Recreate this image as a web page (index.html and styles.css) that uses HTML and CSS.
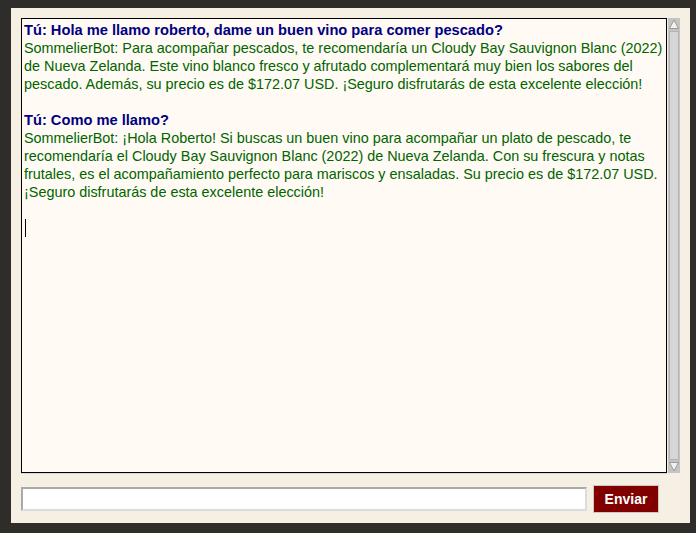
FILE: index.html
```html
<!DOCTYPE html>
<html lang="es">
<head>
<meta charset="utf-8">
<title>SommelierBot</title>
<link rel="stylesheet" href="styles.css">
</head>
<body>
<div class="panel">
  <div class="chat-row">
    <div class="chat">
      <div class="msg">
        <div class="user">Tú: Hola me llamo roberto, dame un buen vino para comer pescado?</div>
        <div class="bot">SommelierBot: Para acompañar pescados, te recomendaría un Cloudy Bay Sauvignon Blanc (2022) de Nueva Zelanda. Este vino blanco fresco y afrutado complementará muy bien los sabores del pescado. Además, su precio es de $172.07 USD. ¡Seguro disfrutarás de esta excelente elección!</div>
      </div>
      <div class="msg">
        <div class="user">Tú: Como me llamo?</div>
        <div class="bot">SommelierBot: ¡Hola Roberto! Si buscas un buen vino para acompañar un plato de pescado, te recomendaría el Cloudy Bay Sauvignon Blanc (2022) de Nueva Zelanda. Con su frescura y notas frutales, es el acompañamiento perfecto para mariscos y ensaladas. Su precio es de $172.07 USD. ¡Seguro disfrutarás de esta excelente elección!</div>
      </div>
      <div class="caret-line"><span class="caret"></span></div>
    </div>
    <div class="scrollbar">
      <div class="arrow">
        <svg width="12" height="12" viewBox="0 0 12 12"><path d="M1.5 10.5 L6 2 L10.5 10.5 Z" fill="#f2f2f2" stroke="#9a9a9a" stroke-width="1"/></svg>
      </div>
      <div class="thumb"></div>
      <div class="arrow">
        <svg width="12" height="12" viewBox="0 0 12 12"><path d="M1.5 1.5 L6 10 L10.5 1.5 Z" fill="#f2f2f2" stroke="#9a9a9a" stroke-width="1"/></svg>
      </div>
    </div>
  </div>
  <div class="composer">
    <input class="entry" type="text">
    <button class="send" type="button">Enviar</button>
  </div>
</div>
</body>
</html>
```
FILE: styles.css
```css
html, body {
  margin: 0;
  padding: 0;
  background: #2f2d29;
}
body {
  padding: 8px 6px 0 11px;
  height: 533px;
  box-sizing: border-box;
  overflow: hidden;
  font-family: "Liberation Sans", Arial, sans-serif;
}
.panel {
  background: #f6efe4;
  height: 515px;
  box-sizing: border-box;
  padding: 10px;
  display: flex;
  flex-direction: column;
  gap: 12px;
}
.chat-row {
  display: flex;
  gap: 1px;
  height: 455px;
  flex: none;
}
.chat {
  width: 646px;
  height: 455px;
  box-sizing: border-box;
  border: 1px solid #000;
  box-shadow: 0 1px 0 #d8d8d8;
  background: #fffaf3;
  padding: 2px;
  font-size: 14.4px;
  line-height: 18px;
}
.msg {
  margin-bottom: 18px;
}
.user {
  color: #000080;
  font-weight: bold;
  font-size: 14.667px;
}
.bot {
  color: #006400;
}
.caret-line {
  height: 18px;
}
.caret {
  display: inline-block;
  width: 1px;
  height: 18px;
  background: #000;
  margin-left: 1px;
}
.scrollbar {
  width: 12px;
  height: 455px;
  background: #c4c4c4;
  display: flex;
  flex-direction: column;
}
.arrow {
  height: 12px;
  flex: none;
  display: flex;
  align-items: center;
  justify-content: center;
  background: #c4c4c4;
}
.arrow svg {
  display: block;
}
.thumb {
  flex: 1;
  margin: 1px 1px;
  background: #d6d6d6;
  border: 1px solid #b4b4b4;
}
.composer {
  display: flex;
  align-items: center;
  gap: 6px;
}
.entry {
  width: 566px;
  height: 24px;
  box-sizing: border-box;
  margin: 0;
  border: 2px solid;
  border-color: #a9a9a9 #dcdcdc #dcdcdc #a9a9a9;
  background: #fff;
  padding: 0 4px;
  font-family: "Liberation Sans", Arial, sans-serif;
  font-size: 14px;
}
.send {
  width: 66px;
  height: 28px;
  box-sizing: border-box;
  margin: 0;
  border: 1px solid #d0c8c0;
  background: #800000;
  color: #fff;
  font-family: "Liberation Sans", Arial, sans-serif;
  font-weight: bold;
  font-size: 14px;
  padding: 0;
}
```
